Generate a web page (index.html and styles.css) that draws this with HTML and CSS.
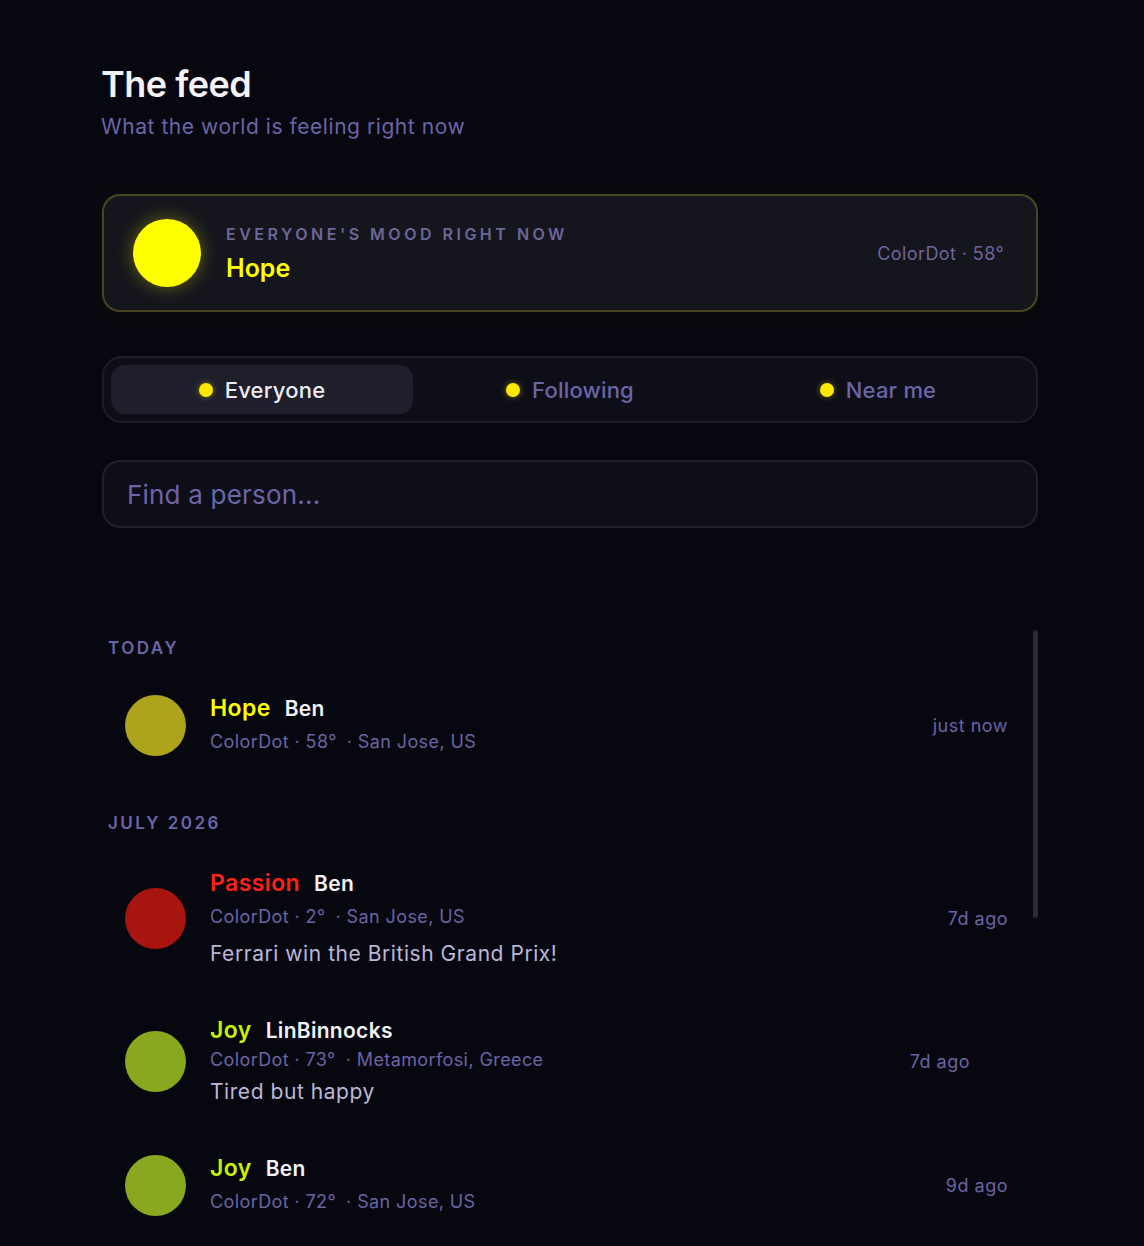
FILE: index.html
```html
<!DOCTYPE html>
<html lang="en">
<head>
    <meta charset="UTF-8">
    <meta name="viewport" content="width=device-width, initial-scale=1.0">
    <title>The feed - ColorDot</title>
    <link rel="stylesheet" href="styles.css">
</head>
<body>

    <div class="page">
        <h1>The feed</h1>
        <p class="subtitle">What the world is feeling right now</p>

        <!-- Overall mood banner -->
        <div class="mood-card">
            <div class="mood-dot"></div>
            <div class="mood-text">
                <div class="mood-label">Everyone's mood right now</div>
                <div class="mood-name">Hope</div>
            </div>
            <div class="mood-meta">ColorDot · 58°</div>
        </div>

        <div class="tabs">
            <button class="tab active"><span class="tab-dot"></span>Everyone</button>
            <button class="tab"><span class="tab-dot"></span>Following</button>
            <button class="tab"><span class="tab-dot"></span>Near me</button>
        </div>

        <input class="search" type="text" placeholder="Find a person...">

        <div class="feed">
            <div class="scroll-thumb"></div>

            <div class="section-label">Today</div>

            <div class="entry">
                <div class="entry-dot" style="background:#ada31d"></div>
                <div class="entry-body">
                    <div class="entry-head"><span class="mood" style="color:#ffff00">Hope</span><span class="user">Ben</span></div>
                    <div class="entry-meta"><span>ColorDot · 58°</span><span class="place">· San Jose, US</span></div>
                </div>
                <div class="entry-time">just now</div>
            </div>

            <div class="section-label">July 2026</div>

            <div class="entry">
                <div class="entry-dot" style="background:#a81511"></div>
                <div class="entry-body">
                    <div class="entry-head"><span class="mood" style="color:#ff2119">Passion</span><span class="user">Ben</span></div>
                    <div class="entry-meta"><span>ColorDot · 2°</span><span class="place">· San Jose, US</span></div>
                    <div class="entry-note">Ferrari win the British Grand Prix!</div>
                </div>
                <div class="entry-time">7d ago</div>
            </div>

            <div class="entry compact">
                <div class="entry-dot" style="background:#88a91f"></div>
                <div class="entry-body">
                    <div class="entry-head"><span class="mood" style="color:#c9f000">Joy</span><span class="user">LinBinnocks</span></div>
                    <div class="entry-meta"><span>ColorDot · 73°</span><span class="place">· Metamorfosi, Greece</span></div>
                    <div class="entry-note">Tired but happy</div>
                </div>
                <div class="entry-time">7d ago</div>
            </div>

            <div class="entry">
                <div class="entry-dot" style="background:#88a91f"></div>
                <div class="entry-body">
                    <div class="entry-head"><span class="mood" style="color:#c9f000">Joy</span><span class="user">Ben</span></div>
                    <div class="entry-meta"><span>ColorDot · 72°</span><span class="place">· San Jose, US</span></div>
                </div>
                <div class="entry-time">9d ago</div>
            </div>
        </div>
    </div>

</body>
</html>
```

FILE: styles.css
```css
body {
    margin: 0;
    font-family: 'Inter', 'Noto Sans', sans-serif;
    background-color: #07070f;
    color: #f2f2f7;
}

.page {
    width: 936px;
    height: 1184px;
    padding: 62px 0 0 102px;
    overflow: hidden;
}

h1 {
    margin: 0 0 0 -1px;
    font-size: 36px;
    font-weight: 600;
    line-height: 44px;
    letter-spacing: -0.5px;
}

.subtitle {
    margin: 7px 0 0 -1px;
    font-size: 21px;
    line-height: 28px;
    color: #6b65a8;
    letter-spacing: 0.55px;
}

/* mood banner */

.mood-card {
    display: flex;
    align-items: center;
    margin-top: 53px;
    height: 118px;
    box-sizing: border-box;
    padding: 0 32px 0 29px;
    background: #15151d;
    border: 2px solid #47471f;
    border-radius: 18px;
    box-shadow: 0 0 24px rgba(255, 255, 0, 0.04);
}

.mood-dot {
    width: 68px;
    height: 68px;
    border-radius: 50%;
    background: #ffff00;
    box-shadow: 0 0 18px rgba(255, 255, 0, 0.35);
    flex-shrink: 0;
}

.mood-text {
    margin-left: 25px;
    flex: 1;
}

.mood-label {
    font-size: 16px;
    font-weight: 600;
    letter-spacing: 3.5px;
    text-transform: uppercase;
    color: #6c6799;
    line-height: 20px;
}

.mood-name {
    margin-top: 9px;
    font-size: 25px;
    font-weight: 600;
    color: #ffff00;
    line-height: 30px;
}

.mood-meta {
    font-size: 18px;
    letter-spacing: 0.4px;
    color: #6c6799;
}

/* filter tabs */

.tabs {
    display: flex;
    gap: 6px;
    margin-top: 44px;
    height: 67px;
    box-sizing: border-box;
    padding: 7px;
    background: #0e0e18;
    border: 2px solid #1e1e2a;
    border-radius: 20px;
}

.tab {
    flex: 1;
    display: flex;
    align-items: center;
    justify-content: center;
    gap: 12px;
    background: none;
    border: none;
    border-radius: 14px;
    font-family: inherit;
    font-size: 22px;
    font-weight: 500;
    letter-spacing: 0.2px;
    color: #6b65a8;
    cursor: pointer;
}

.tab.active {
    background: #1f1f2c;
    color: #ececf2;
}

.tab-dot {
    width: 14px;
    height: 14px;
    border-radius: 50%;
    background: #ffe800;
    box-shadow: 0 0 6px rgba(255, 232, 0, 0.4);
}

.search {
    display: block;
    width: 100%;
    height: 68px;
    box-sizing: border-box;
    margin-top: 37px;
    padding: 0 23px;
    background: #0e0e19;
    border: 2px solid #20202d;
    border-radius: 18px;
    font-family: inherit;
    font-size: 26px;
    letter-spacing: 0.2px;
    color: #ececf2;
    outline: none;
}

.search::placeholder {
    color: #6b65a8;
}

/* feed list */

.feed {
    position: relative;
    margin-top: 101px;
    padding: 8px 6px 0;
}

.scroll-thumb {
    position: absolute;
    top: 1px;
    right: 0;
    width: 5px;
    height: 288px;
    border-radius: 3px;
    background: #2a2a32;
}

.section-label {
    margin: 0 0 11px;
    font-size: 17px;
    font-weight: 600;
    line-height: 22px;
    letter-spacing: 2.5px;
    text-transform: uppercase;
    color: #6b65a8;
}

.entry + .section-label {
    margin-top: 32px;
}

.entry {
    display: flex;
    align-items: center;
    padding: 23px 24px 23px 17px;
}

.entry-dot {
    width: 61px;
    height: 61px;
    border-radius: 50%;
    flex-shrink: 0;
}

.entry-body {
    flex: 1;
    margin-left: 24px;
}

.entry-head {
    display: flex;
    align-items: baseline;
    height: 30px;
    line-height: 30px;
}

.mood {
    font-size: 23px;
    font-weight: 600;
    letter-spacing: 0.4px;
}

.user {
    margin-left: 14px;
    font-size: 21px;
    font-weight: 600;
    letter-spacing: 0.3px;
    color: #f2f2f7;
}

.entry-meta {
    margin-top: 4px;
    font-size: 18px;
    letter-spacing: 0.4px;
    line-height: 30px;
    color: #6a64a4;
}

.place {
    margin-left: 10px;
}

.entry-note {
    margin-top: 7px;
    font-size: 21px;
    letter-spacing: 0.55px;
    line-height: 30px;
    color: #bab7d8;
}

.entry-time {
    font-size: 18px;
    letter-spacing: 0.5px;
    color: #6a64a4;
}

.compact .entry-meta {
    margin-top: 0;
}

.compact .entry-note {
    margin-top: 2px;
}

.compact .entry-time {
    margin-right: 38px;
}
```
